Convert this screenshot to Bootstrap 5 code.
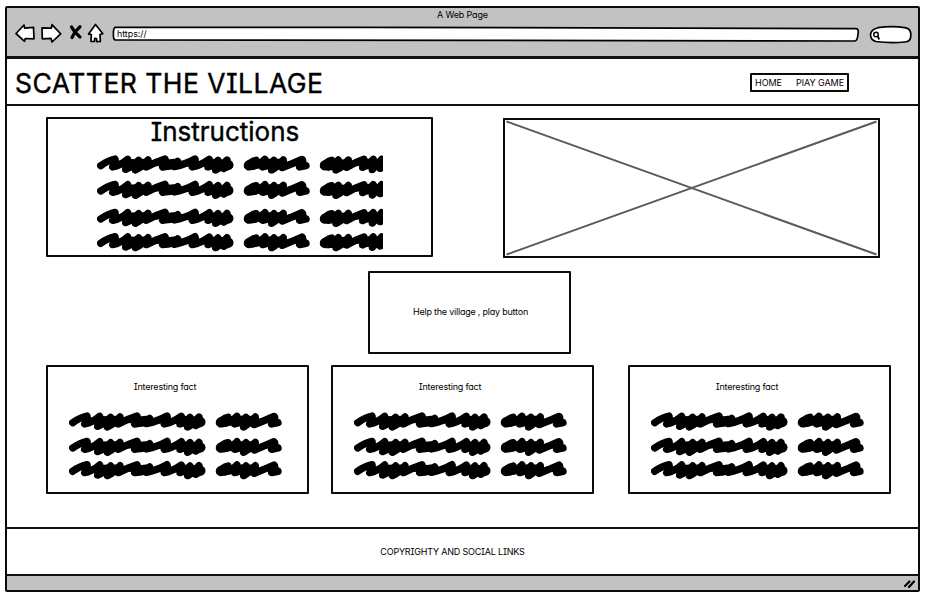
<!DOCTYPE html>
<html lang="en">
<head>
<meta charset="utf-8">
<meta name="viewport" content="width=device-width, initial-scale=1">
<title>Scatter the Village</title>
<link href="https://cdn.jsdelivr.net/npm/bootstrap@5.3.0/dist/css/bootstrap.min.css" rel="stylesheet">
<style>
  body { font-family: Inter, Lato, sans-serif; font-feature-settings: "cv11", "cv08"; font-size: 9px; line-height: 12px; color: #000; background: #fff; overflow: hidden; }
  svg { display: block; flex: none; }
  .window { width: 915px; height: 586px; margin: 6px 0 0 5px; border: 2px solid #0b0b0b; border-radius: 2px; }
  .toolbar { height: 48px; background: #c2c2c2; }
  .window-title { height: 14px; padding-top: 1px; letter-spacing: -.15px; }
  .tools { height: 27px; padding-left: 8px; }
  .address { width: 747px; height: 20px; margin-left: -1px; }
  .address span { left: 5px; top: 6px; font-size: 8.8px; }
  .site-header { height: 50px; border-top: 3px solid #111; border-bottom: 2px solid #111; padding: 2px 69px 0 8px; }
  .site-title { font-size: 26.5px; line-height: 30px; font-weight: 400; letter-spacing: .46px; -webkit-text-stroke: .4px #000; }
  .site-nav { width: 99px; height: 19px; padding: 0 3px; }
  .site-nav a { letter-spacing: -.05px; }
  .frame { border: 2px solid #0b0b0b; border-radius: 1px; }
  .content { height: 421px; padding: 11px 0 0 39px; }
  .instructions { width: 387px; height: 140px; padding-left: 49px; }
  .instructions h2 { font-size: 26px; line-height: 26px; width: 256px; margin: 0 0 8px; font-weight: 400; -webkit-text-stroke: .4px #000; }
  .picture { width: 377px; height: 140px; margin: 1px 0 0 70px; }
  .play { width: 203px; height: 83px; margin: 13px 0 0 322px; padding: 0 0 2px 2px; letter-spacing: -.22px; }
  .facts { margin-top: 11px; }
  .fact { width: 263px; height: 129px; padding: 13px 0 0 21px; }
  .fact + .fact { margin-left: 22px; }
  .fact + .fact + .fact { margin-left: 34px; }
  .fact h3 { width: 192px; font-size: 9px; line-height: 14px; margin: 0 0 18px; font-weight: 400; letter-spacing: -.2px; }
  .site-footer { height: 49px; border-top: 2px solid #111; border-bottom: 2px solid #111; padding-right: 20px; letter-spacing: -.2px; }
  .status { height: 14px; background: #c2c2c2; padding-right: 2px; }
</style>
<script src="https://cdn.jsdelivr.net/npm/bootstrap@5.3.0/dist/js/bootstrap.bundle.min.js"></script>
</head>
<body>
<svg width="0" height="0" class="position-absolute" aria-hidden="true">
  <defs>
    <g id="scribble" fill="none" stroke="#000" stroke-width="22" stroke-linecap="round" stroke-linejoin="round">
      <path d="M11 32Q35 15 54 12Q58 16 47 36Q70 32 92 13L86 43Q108 34 125 16L115 45Q138 34 153 15L148 36Q178 20 204 12Q208 18 197 36Q222 34 242 19L232 35Q266 28 294 12Q298 18 286 36Q310 32 337 13L333 36Q350 32 363 16L356 45Q376 34 390 15L380 41L397 31"/>
      <path d="M452 33Q460 20 477 16L467 34Q488 30 504 13L497 36Q516 32 531 16L524 45Q544 34 559 15L556 38Q586 26 615 13Q622 18 608 36L627 32"/>
      <path d="M680 33Q688 20 704 16L694 36Q712 30 724 15L717 45Q740 34 754 15L749 37Q774 22 801 13L797 37Q816 28 829 13L826 44L854 13L850 40L866 30"/>
      <path d="M92 28L148 27M213 29L232 27M337 27L394 30M456 31L480 26M498 27L556 27M684 31L748 28M802 27L858 28" stroke-width="31"/>
      <path d="M66 26L92 24M166 26L200 24M254 28L292 24M306 27L330 26M576 27L600 24M766 27L790 24" stroke-width="17"/>
    </g>
  </defs>
</svg>
<div class="window">
  <header class="toolbar">
    <div class="window-title text-center">A Web Page</div>
    <div class="tools d-flex">
      <svg width="98" height="24" viewBox="15 20 98 24" fill="#fff" stroke="#000" stroke-width="1.7" stroke-linejoin="round" stroke-linecap="round">
        <path d="M16 31.500L24 23L24.700 26.200L33.500 25.300L34 36.800L25.300 36.500L24.500 39.300Z"/>
        <path d="M42 25.800L51.300 26.200L52 22.700L60.700 31.800L52 40L51 36.300L42.300 36.800Z"/>
        <path d="M71.500 25Q74 30 80 35M80 24.800Q75 29 72 35.500" stroke-width="3.2"/>
        <path d="M95.500 22.500L102.800 31.700L100 32.500L100.400 39.500L96.700 39.700L96.500 36.500L94.700 36.300L94.400 39.500L91 39.500L91.300 32.500L88.600 32.100Z"/>
      </svg>
      <div class="address position-relative">
        <svg width="748" height="20" viewBox="0 0 748 20"><path d="M3 5.300L250 5.300L744 6.700Q747 7 746 12Q745.500 18.500 743 19L380 18.400L3 18Q1 17 1.500 12Q1 7 3 5.300Z" fill="#fff" stroke="#000" stroke-width="1.7"/></svg>
        <span class="position-absolute">https://</span>
      </div>
      <svg width="46" height="22" viewBox="867 21.500 46 22" class="ms-2" fill="#fff" stroke="#000" stroke-width="1.7" stroke-linecap="round">
        <path d="M878 27.200Q892 25 906 27.300Q911 28.500 910.800 34.500Q911 41 905 41.500Q890 43 876 41Q870.500 39.500 870.500 34Q871 29 878 27.200Z"/>
        <circle cx="876" cy="34" r="2.300" stroke-width="1.400"/><path d="M877.800 36L879 38.200" stroke-width="1.800"/>
      </svg>
    </div>
  </header>
  <div class="site-header d-flex align-items-center justify-content-between">
    <h1 class="site-title m-0">SCATTER THE VILLAGE</h1>
    <nav class="site-nav frame d-flex align-items-center justify-content-between">
      <a class="text-black text-decoration-none">HOME</a>
      <a class="text-black text-decoration-none">PlAY GAME</a>
    </nav>
  </div>
  <main class="content">
    <div class="d-flex">
      <section class="instructions frame">
        <h2 class="text-center">Instructions</h2>
        <svg width="286" height="104" viewBox="0 0 858 312">
          <use href="#scribble" y="6"/><use href="#scribble" y="82"/><use href="#scribble" y="166"/><use href="#scribble" y="239"/>
        </svg>
      </section>
      <svg class="picture" viewBox="0 0 377 140" fill="none">
        <rect x="1" y="1" width="375" height="138" stroke="#000" stroke-width="1.900"/>
        <path d="M3.500 3.500L373.500 136.500M3.500 136.500L373.500 3.500" stroke="#5a5a5a" stroke-width="2"/>
      </svg>
    </div>
    <div class="play frame d-flex align-items-center justify-content-center">Help the village , play button</div>
    <div class="facts d-flex">
      <section class="fact frame">
        <h3 class="text-center">Interesting fact</h3>
        <svg width="215" height="69" viewBox="0 0 645 207"><use href="#scribble"/><use href="#scribble" y="76"/><use href="#scribble" y="146"/></svg>
      </section>
      <section class="fact frame">
        <h3 class="text-center">Interesting fact</h3>
        <svg width="215" height="69" viewBox="0 0 645 207"><use href="#scribble"/><use href="#scribble" y="76"/><use href="#scribble" y="146"/></svg>
      </section>
      <section class="fact frame">
        <h3 class="text-center">Interesting fact</h3>
        <svg width="215" height="69" viewBox="0 0 645 207"><use href="#scribble"/><use href="#scribble" y="76"/><use href="#scribble" y="146"/></svg>
      </section>
    </div>
  </main>
  <footer class="site-footer d-flex align-items-center justify-content-center">COPYRIGHTY AND SOCIAL LINKS</footer>
  <div class="status d-flex align-items-center justify-content-end">
    <svg width="13" height="11" viewBox="0 0 13 11" stroke="#000" stroke-width="2.2" stroke-linecap="round"><path d="M2 8L6.500 3.500M6 9L11 3.500"/></svg>
  </div>
</div>
</body>
</html>
